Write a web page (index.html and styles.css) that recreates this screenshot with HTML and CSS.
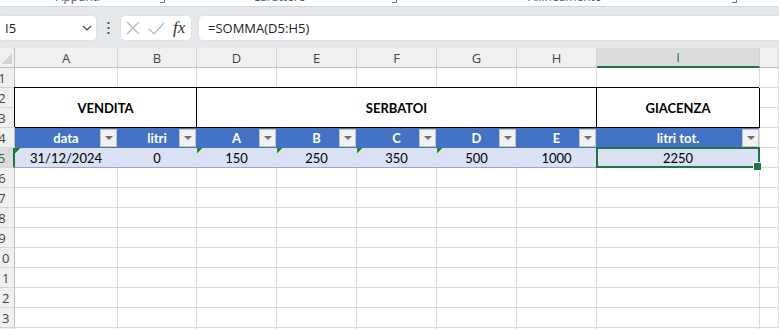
FILE: index.html
```html
<!DOCTYPE html>
<html lang="it">

<head>
  <meta charset="UTF-8">
  <meta name="viewport" content="width=device-width, initial-scale=1.0">
  <title>Giacenza</title>
  <link rel="stylesheet" href="styles.css">
</head>

<body>
  <div class="ribbon">
    <div class="grp g1"><span>Appunti</span><i class="launch"></i></div>
    <div class="grp g2"><span>Carattere</span><i class="launch"></i></div>
    <div class="grp g3"><span>Allineamento</span><i class="launch"></i></div>
  </div>

  <div class="fbar">
    <div class="namebox">
      <span>I5</span>
      <svg width="10" height="6" viewBox="0 0 10 6"><path d="M1 1L5 5L9 1" fill="none" stroke="#444" stroke-width="1.2"/></svg>
    </div>
    <div class="dots">
      <svg width="3" height="12" viewBox="0 0 3 12"><rect x="0.5" y="0" width="2" height="2" fill="#555"/><rect x="0.5" y="5" width="2" height="2" fill="#555"/><rect x="0.5" y="10" width="2" height="2" fill="#555"/></svg>
    </div>
    <div class="fxbox">
      <svg width="14" height="14" viewBox="0 0 14 14"><path d="M1 1L13 13M13 1L1 13" stroke="#b5b5b5" stroke-width="1.2"/></svg>
      <svg width="17" height="13" viewBox="0 0 17 13"><path d="M1 7L6 12L16 1" fill="none" stroke="#b5b5b5" stroke-width="1.2"/></svg>
      <span class="fx">fx</span>
    </div>
    <div class="formula">=SOMMA(D5:H5)</div>
  </div>

  <div class="sheet">
    <!-- intestazioni colonne (C nascosta) -->
    <div class="corner"></div>
    <div class="ch">A</div><div class="ch">B</div><div class="ch">D</div><div class="ch">E</div>
    <div class="ch">F</div><div class="ch">G</div><div class="ch">H</div><div class="ch on">I</div><div class="ch"></div>

    <div class="rh">1</div>
    <div></div><div></div><div></div><div></div><div></div><div></div><div></div><div></div><div></div>

    <div class="rh">2</div>
    <div class="box w2">VENDITA</div>
    <div class="box w5">SERBATOI</div>
    <div class="box w1">GIACENZA</div>
    <div></div>
    <div class="rh">3</div>
    <div></div>

    <div class="rh">4</div>
    <div class="th"><span>data</span><i class="flt"></i></div>
    <div class="th"><span>litri</span><i class="flt"></i></div>
    <div class="th"><span>A</span><i class="flt"></i></div>
    <div class="th"><span>B</span><i class="flt"></i></div>
    <div class="th"><span>C</span><i class="flt"></i></div>
    <div class="th"><span>D</span><i class="flt"></i></div>
    <div class="th"><span>E</span><i class="flt"></i></div>
    <div class="th last"><span>litri tot.</span><i class="flt"></i></div>
    <div></div>

    <div class="rh on">5</div>
    <div class="td tri">31/12/2024</div>
    <div class="td">0</div>
    <div class="td tri">150</div>
    <div class="td tri">250</div>
    <div class="td tri">350</div>
    <div class="td tri">500</div>
    <div class="td">1000</div>
    <div class="td cur">2250</div>
    <div></div>

    <div class="rh">6</div><div></div><div></div><div></div><div></div><div></div><div></div><div></div><div></div><div></div>
    <div class="rh">7</div><div></div><div></div><div></div><div></div><div></div><div></div><div></div><div></div><div></div>
    <div class="rh">8</div><div></div><div></div><div></div><div></div><div></div><div></div><div></div><div></div><div></div>
    <div class="rh">9</div><div></div><div></div><div></div><div></div><div></div><div></div><div></div><div></div><div></div>
    <div class="rh">10</div><div></div><div></div><div></div><div></div><div></div><div></div><div></div><div></div><div></div>
    <div class="rh">11</div><div></div><div></div><div></div><div></div><div></div><div></div><div></div><div></div><div></div>
    <div class="rh">12</div><div></div><div></div><div></div><div></div><div></div><div></div><div></div><div></div><div></div>
    <div class="rh">13</div><div></div><div></div><div></div><div></div><div></div><div></div><div></div><div></div><div></div>
    <div class="rh">14</div><div></div><div></div><div></div><div></div><div></div><div></div><div></div><div></div><div></div>
  </div>
</body>

</html>
```

FILE: styles.css
```css
* {
  box-sizing: border-box;
}

body {
  margin: 0;
  width: 779px;
  height: 329px;
  overflow: hidden;
  background: #fff;
  font-family: "Open Sans", "Noto Sans", sans-serif;
}

/* resto del ribbon, tagliato in alto */
.ribbon {
  display: flex;
  height: 7px;
  overflow: hidden;
  background: #fff;
  border-bottom: 1px solid #d3d7db;
}

.ribbon .grp {
  display: flex;
}

.ribbon .g1 {
  width: 170px;
}

.ribbon .g2 {
  width: 232px;
}

.ribbon .g3 {
  width: 340px;
}

.ribbon span {
  flex: 1;
  text-align: center;
  font-size: 12px;
  line-height: 16px;
  margin-top: -11px;
  color: #555;
}

.ribbon .launch {
  width: 5px;
  height: 3px;
  margin: 0 5px 0 4px;
  border-right: 1px solid #777;
  border-bottom: 1px solid #777;
}

/* barra della formula */
.fbar {
  display: flex;
  height: 41px;
  padding: 8px 0 7px;
  background: #e4e8eb;
}

.namebox {
  width: 101px;
  margin-left: -4px;
  display: flex;
  align-items: center;
  justify-content: space-between;
  padding: 0 4px 0 8px;
  background: #fff;
  border: 1px solid #dde1e5;
  border-radius: 5px;
  font-size: 13px;
  color: #222;
}

.dots {
  width: 23px;
  display: flex;
  align-items: center;
  justify-content: center;
}

.fxbox {
  width: 72px;
  display: flex;
  align-items: center;
  gap: 8px;
  padding-left: 5px;
  background: #fff;
  border: 1px solid #dde1e5;
  border-radius: 5px;
}

.fxbox .fx {
  font-family: "Liberation Serif", serif;
  font-style: italic;
  font-size: 17px;
  color: #333;
}

.formula {
  flex: 1;
  margin: 0 -6px 0 6px;
  padding-left: 9px;
  display: flex;
  align-items: center;
  background: #fff;
  border: 1px solid #dde1e5;
  border-radius: 5px;
  font-size: 13px;
  color: #222;
}

/* foglio */
.sheet {
  display: grid;
  grid-template-columns: 25px 103px 79px 80px 80px 80px 80px 80px 163px 1fr;
  grid-auto-rows: 20px;
  margin-left: -10px;
  font-family: Lato, "Liberation Sans", sans-serif;
  font-size: 13px;
  color: #000;
}

.sheet > div {
  display: flex;
  align-items: center;
  justify-content: center;
  border-right: 1px solid #dadada;
  border-bottom: 1px solid #dadada;
}

.sheet > .corner {
  background: #f0f0f0 linear-gradient(to top left, #d2d2d2 50%, transparent 50%) no-repeat right 2px bottom 3px / 11px 11px;
  border-right-color: #bdbdbd;
  border-bottom-color: #bdbdbd;
}

.sheet > .ch {
  background: #f0f0f0;
  border-right-color: #d3d3d3;
  border-bottom-color: #bdbdbd;
  font-family: "Open Sans", "Noto Sans", sans-serif;
  color: #444;
}

.sheet > .ch.on {
  background: #dcdcdc;
  border-bottom: 2px solid #217346;
  color: #217346;
}

.sheet > .rh {
  justify-content: center;
  background: #f0f0f0;
  border-right-color: #bdbdbd;
  border-bottom-color: #d6d6d6;
  font-family: "Open Sans", "Noto Sans", sans-serif;
  color: #444;
}

.sheet > .rh.on {
  background: #dcdcdc;
  border-right: 2px solid #217346;
  color: #217346;
}

.sheet > .box {
  grid-row: span 2;
  border-color: #000;
  box-shadow: -1px -1px 0 #000;
  z-index: 1;
  font-weight: 700;
}

.sheet > .w2 {
  grid-column: span 2;
}

.sheet > .w5 {
  grid-column: span 5;
}

.sheet > .th {
  justify-content: space-between;
  background: #4472c4;
  border-right-color: #4472c4;
  border-bottom-color: #4472c4;
  color: #fff;
  font-weight: 700;
}

.sheet > .th::before {
  content: "";
  width: 17px;
}

.sheet > .th.last {
  border-right-color: #dadada;
}

.th span {
  flex: 1;
  text-align: center;
}

.flt {
  width: 17px;
  height: 18px;
  display: flex;
  align-items: center;
  justify-content: center;
  background: #f1f1f1;
  border: 1px solid #c4c4c4;
}

.flt::after {
  content: "";
  border-left: 4px solid transparent;
  border-right: 4px solid transparent;
  border-top: 4px solid #6f6f6f;
}

.sheet > .td {
  background: #d9e1f2;
  border-right-color: #d9e1f2;
  border-bottom-color: #8ea9db;
}

.sheet > .tri {
  background: #d9e1f2 linear-gradient(135deg, #1f8a1f 3.6px, transparent 3.6px) no-repeat 0 0 / 6px 6px;
}

.sheet > .cur {
  position: relative;
  z-index: 2;
  border-right-color: #dadada;
}

.cur::before {
  content: "";
  position: absolute;
  inset: -1px;
  border: 2px solid #217346;
}

.cur::after {
  content: "";
  position: absolute;
  right: -3px;
  bottom: -4px;
  width: 7px;
  height: 7px;
  background: #217346;
  border: 1px solid #fff;
}
```
